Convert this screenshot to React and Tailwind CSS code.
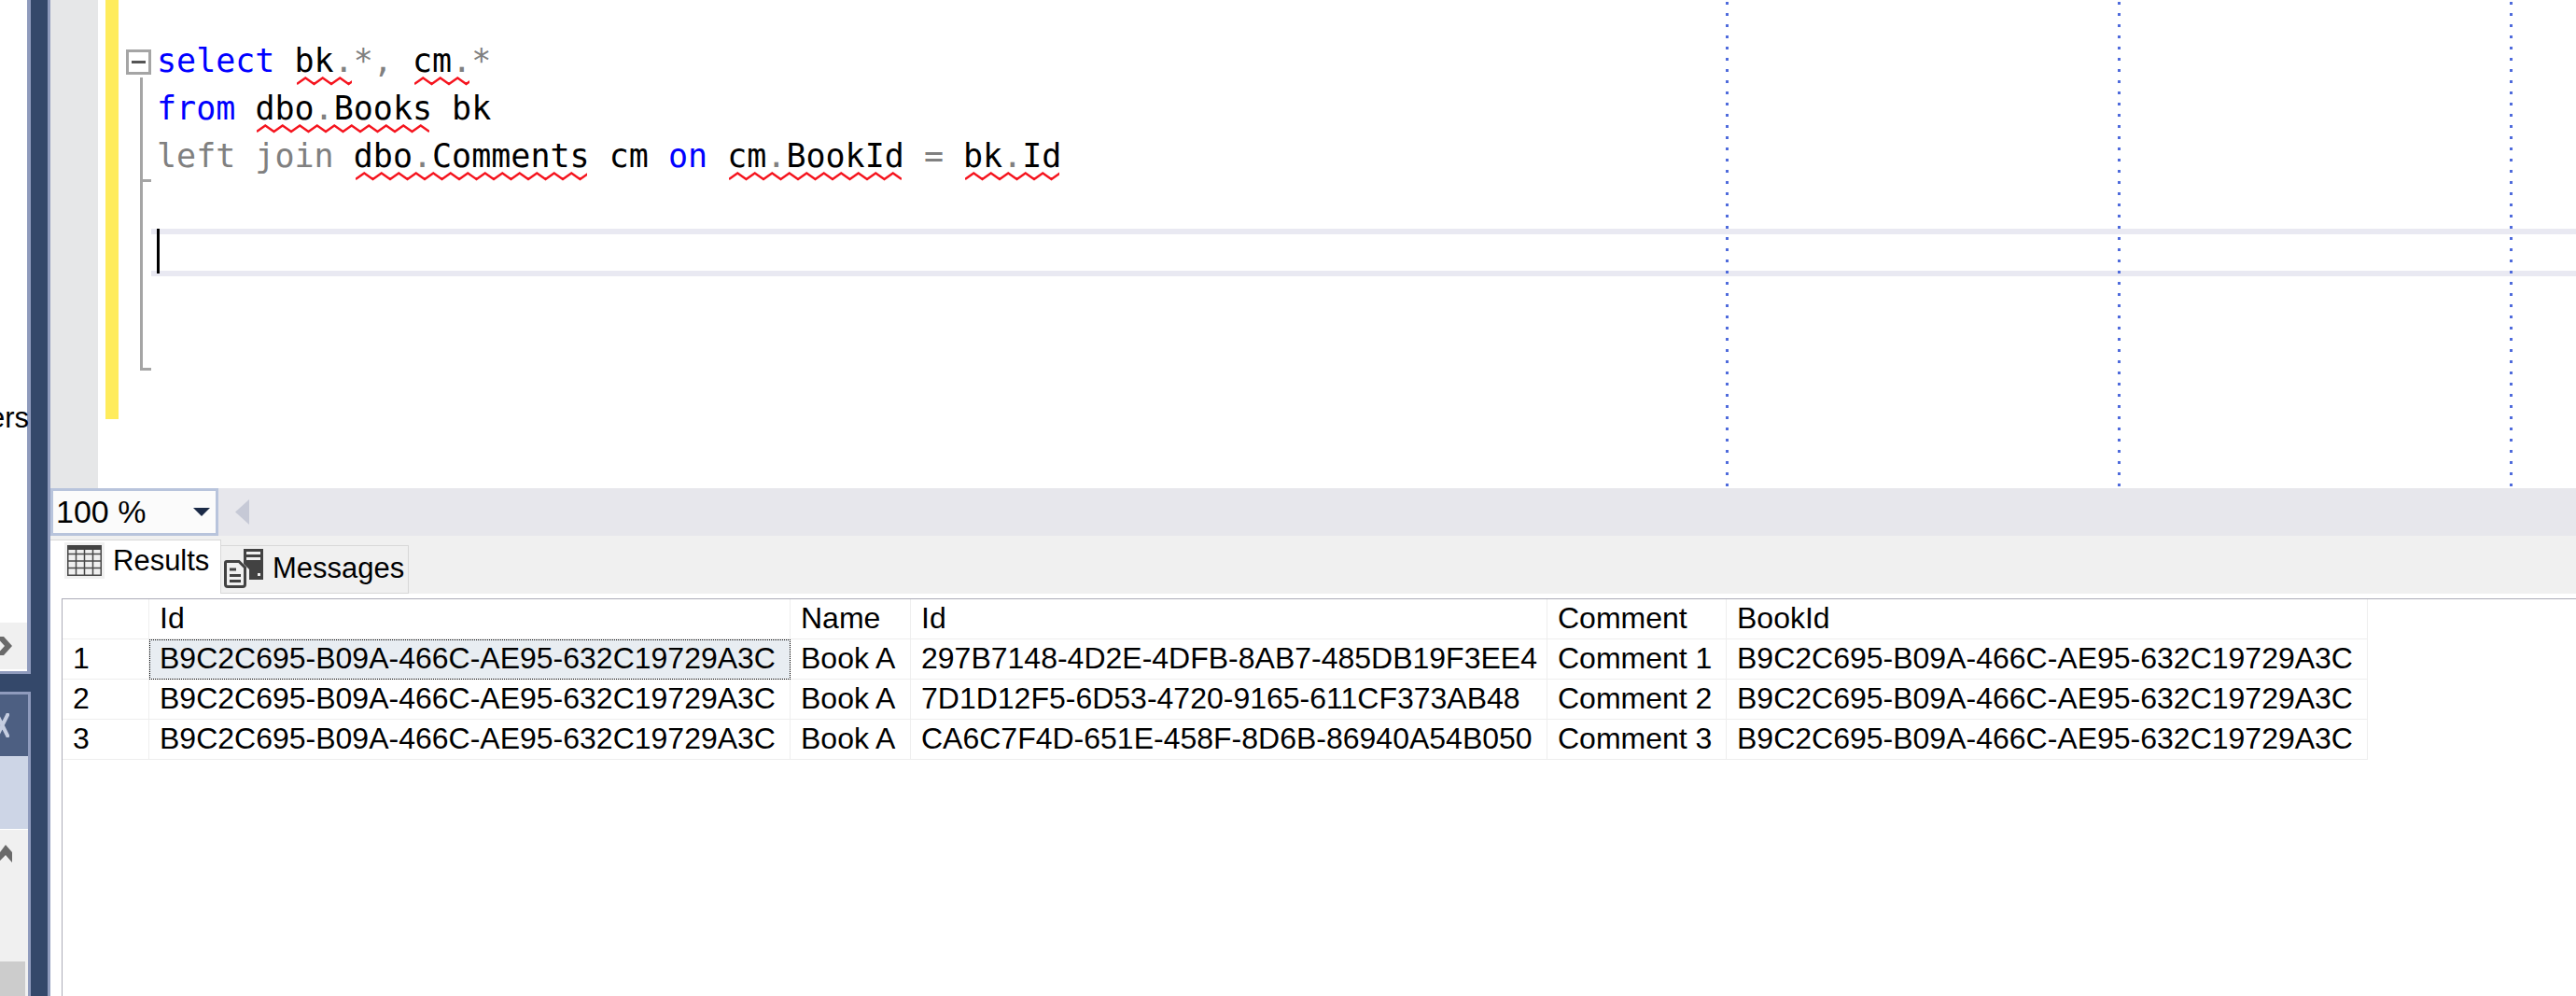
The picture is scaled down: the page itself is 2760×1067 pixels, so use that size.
const KW = 'text-[#0000ff]';
const OP = 'text-[#808080]';

const rows = [
    ['1', 'B9C2C695-B09A-466C-AE95-632C19729A3C', 'Book A', '297B7148-4D2E-4DFB-8AB7-485DB19F3EE4', 'Comment 1', 'B9C2C695-B09A-466C-AE95-632C19729A3C'],
    ['2', 'B9C2C695-B09A-466C-AE95-632C19729A3C', 'Book A', '7D1D12F5-6D53-4720-9165-611CF373AB48', 'Comment 2', 'B9C2C695-B09A-466C-AE95-632C19729A3C'],
    ['3', 'B9C2C695-B09A-466C-AE95-632C19729A3C', 'Book A', 'CA6C7F4D-651E-458F-8D6B-86940A54B050', 'Comment 3', 'B9C2C695-B09A-466C-AE95-632C19729A3C'],
];
const headers = ['', 'Id', 'Name', 'Id', 'Comment', 'BookId'];

// red squiggle under a run of n characters
function Squiggle({ chars, children }) {
    const w = chars * 21 - 4;
    const pts = [];
    for (let x = 0, i = 0; x <= w + 9; x += 9.25, i++) {
        pts.push(`${x},${i % 2 === 0 ? 8 : 1.5}`);
    }
    return (
        <span className="relative inline-block">
            {children}
            <svg width={w} height="10" className="absolute left-[2px] top-[42px]">
                <polyline points={pts.join(' ')} fill="none" stroke="#f5141e" strokeWidth="2.4" />
            </svg>
        </span>
    );
}

function FoldMarkers() {
    return (
        <svg width="27" height="345" className="absolute left-[8px] top-[53px]">
            <rect x="1.5" y="1.5" width="24" height="24" fill="#fff" stroke="#a5a5a5" strokeWidth="3" />
            <rect x="6" y="12" width="15" height="3" fill="#555" />
            <rect x="15" y="30" width="3" height="314" fill="#a5a5a5" />
            <rect x="15" y="139" width="12" height="3" fill="#a5a5a5" />
            <rect x="15" y="341" width="12" height="3" fill="#a5a5a5" />
        </svg>
    );
}

function Editor() {
    return (
        <div className="relative flex h-[523px] bg-white overflow-hidden">
            <div className="w-[51px] bg-[#e6e7e8]" />
            <div className="w-[8px]" />
            <div className="w-[14px] h-[449px] bg-[#ffec5c]" />
            <div className="relative w-[35px]">
                <FoldMarkers />
            </div>
            <div className="flex-1 pt-[41px] font-['DejaVu_Sans_Mono',monospace] text-[35px] leading-[51px] text-black whitespace-pre">
                <div className="pl-[6px] -mt-[1px]">
                    <span className={KW}>select</span> <Squiggle chars={3}>bk<span className={OP}>.</span></Squiggle><span className={OP}>*,</span> <Squiggle chars={3}>cm<span className={OP}>.</span></Squiggle><span className={OP}>*</span>
                </div>
                <div className="pl-[6px]">
                    <span className={KW}>from</span> <Squiggle chars={9}>dbo<span className={OP}>.</span>Books</Squiggle> bk
                </div>
                <div className="pl-[6px]">
                    <span className={OP}>left join</span> <Squiggle chars={12}>dbo<span className={OP}>.</span>Comments</Squiggle> cm <span className={KW}>on</span> <Squiggle chars={9}>cm<span className={OP}>.</span>BookId</Squiggle> <span className={OP}>=</span> <Squiggle chars={5}>bk<span className={OP}>.</span>Id</Squiggle>
                </div>
                <div className="h-[52px]" />
                <div className="relative h-[51px] border-y-[6px] border-[#e9e9f2]">
                    <div className="absolute left-[6px] top-[-6px] w-[3px] h-[48px] bg-black" />
                </div>
            </div>
            <div className="absolute left-[1795px] top-[2px] w-[3px] h-[519px] bg-[linear-gradient(#4f6bdc_3px,transparent_3px)] bg-[length:3px_12px]" />
            <div className="absolute left-[2215px] top-[2px] w-[3px] h-[519px] bg-[linear-gradient(#4f6bdc_3px,transparent_3px)] bg-[length:3px_12px]" />
            <div className="absolute left-[2635px] top-[2px] w-[3px] h-[519px] bg-[linear-gradient(#4f6bdc_3px,transparent_3px)] bg-[length:3px_12px]" />
        </div>
    );
}

function ZoomBar() {
    return (
        <div className="flex items-center h-[51px] bg-[#e7e7ec]">
            <div className="flex items-center justify-between w-[180px] h-[51px] pl-[3px] pr-[6px] border-[3px] border-[#b8c4dc] bg-[#fbfbfb] text-[34px] text-black">
                <span>100 %</span>
                <svg width="18" height="9"><polygon points="0,0 18,0 9,9" fill="#1b2a47" /></svg>
            </div>
            <svg width="15" height="27" className="ml-[18px]"><polygon points="15,0 15,27 0,13.5" fill="#c6c9d6" /></svg>
        </div>
    );
}

function TableIcon() {
    return (
        <svg width="37" height="33">
            <rect x="0" y="0" width="37" height="5" fill="#424242" />
            <path d="M0.75 0V33M9.5 5V33M18.5 5V33M27.5 5V33M36.25 0V33M0 9.5H37M0 17H37M0 24.5H37M0 32.25H37" stroke="#484848" strokeWidth="1.5" fill="none" />
        </svg>
    );
}

function MessagesIcon() {
    return (
        <svg width="42" height="42">
            <path d="M21 0H42V33H21Z" fill="#424242" />
            <rect x="24" y="3" width="15" height="3" fill="#f0f0f0" />
            <rect x="24" y="9" width="15" height="3" fill="#f0f0f0" />
            <rect x="36" y="26" width="3" height="3" fill="#f0f0f0" />
            <path d="M0 12H17L27 22V42H0Z" fill="#f0f0f0" />
            <path d="M3 13.5H16L22.5 20V38Q22.5 40.5 20 40.5H4Q1.5 40.5 1.5 38V15Q1.5 13.5 3 13.5Z" fill="#f0f0f0" stroke="#424242" strokeWidth="3" />
            <path d="M6 22H13M6 28.5H18M6 34.5H18" stroke="#424242" strokeWidth="3" />
        </svg>
    );
}

function Tabs() {
    return (
        <div className="flex items-start h-[62px] pt-[4px] bg-[#f0f0f0] text-[31px] text-black">
            <div className="flex items-start h-[58px] w-[183px] pl-[15px] pt-[2px] bg-white border-t border-r border-[#d8d8d8]">
                <div className="flex items-center justify-center w-[43px] h-[39px] bg-[#f0f0f0]">
                    <TableIcon />
                </div>
                <span className="ml-[9px] leading-[39px]">Results</span>
            </div>
            <div className="flex items-center h-[52px] w-[201px] mt-[6px] pl-[3px] pb-[2px] border border-l-0 border-[#d8d8d8]">
                <MessagesIcon />
                <span className="ml-[10px]">Messages</span>
            </div>
        </div>
    );
}

function Cell({ text, className }) {
    return (
        <div className={`h-[43px] flex items-center pl-[11px] pb-[2px] border-r border-b border-[#eeeeee] whitespace-nowrap ${className || ''}`}>
            {text}
        </div>
    );
}

function ResultGrid() {
    return (
        <div className="flex-1 bg-white pt-[5px] pl-[12px]">
            <div className="h-full border-l border-t border-[#acacb8] text-[32px] text-black">
                <div className="grid grid-cols-[93px_687px_129px_682px_192px_687px] w-fit">
                    {headers.map((h, i) => (
                        <Cell key={i} text={h} />
                    ))}
                    {rows.map(row =>
                        row.map((c, i) => (
                            <Cell
                                key={row[0] + i}
                                text={c}
                                className={
                                    i === 0 ? 'pl-[9px]' : row[0] === '1' && i === 1 ? 'bg-[#e8edf2] outline-1 outline-dotted outline-black -outline-offset-1' : ''
                                }
                            />
                        ))
                    )}
                </div>
            </div>
        </div>
    );
}

function SidePanel() {
    return (
        <div className="flex flex-col w-[33px] h-full bg-[#34486a] overflow-hidden text-[31px] text-black">
            <div className="flex flex-col h-[722px] border-r-4 border-b-[3px] border-[#8f9bbd] bg-white">
                <div className="h-[667px] pt-[430px] flex justify-end">
                    <span className="whitespace-nowrap leading-[36px] -mr-[2px]">ers</span>
                </div>
                <div className="flex items-center h-[51px] bg-[#f0f0f0] border-b border-white">
                    <svg width="14" height="20"><path d="M4 0L13 10L4 20H-4L5 10L-4 0Z" fill="#6a6a6a" /></svg>
                </div>
            </div>
            <div className="flex flex-col flex-1 mt-[19px] border-t-[3px] border-r-[3px] border-[#8f9bbd]">
                <div className="flex items-center h-[66px] bg-[#4d5f82]">
                    <svg width="10" height="26"><path d="M-4 0L9 26M9 0L-4 26" stroke="#c5cde0" strokeWidth="4" /></svg>
                </div>
                <div className="h-[78px] bg-[#cdd5e6]" />
                <div className="flex flex-col justify-between flex-1 bg-[#f0f0f0] border-t border-white">
                    <svg width="14" height="20" className="mt-[16px]"><path d="M0 8L6 0L13 8V19L6 11L0 17Z" fill="#6a6a6a" /></svg>
                    <div className="w-[27px] h-[37px] bg-[#cccccc]" />
                </div>
            </div>
        </div>
    );
}

export default function App() {
    return (
        <div className="flex w-[2760px] h-[1067px] overflow-hidden bg-white font-['Liberation_Sans',sans-serif]">
            <SidePanel />
            <div className="w-[18px] bg-[#34486a]" />
            <div className="w-[3px] bg-[#8f9bbd]" />
            <div className="flex flex-col flex-1 min-w-0">
                <Editor />
                <ZoomBar />
                <Tabs />
                <ResultGrid />
            </div>
        </div>
    );
}
